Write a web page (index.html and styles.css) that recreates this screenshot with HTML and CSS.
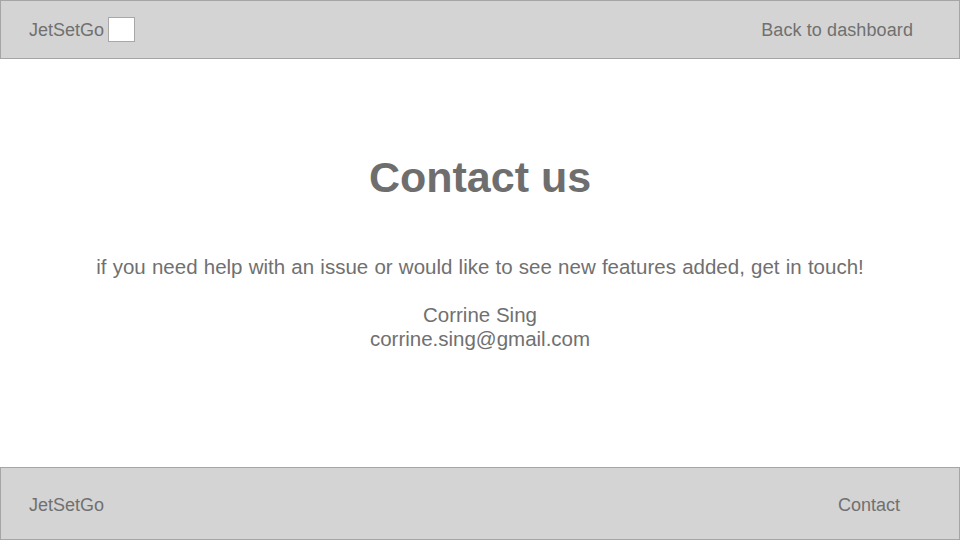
FILE: index.html
```html
<!DOCTYPE html>
<html lang="en">
<head>
<meta charset="utf-8">
<title>Contact us - JetSetGo</title>
<link rel="stylesheet" href="styles.css">
</head>
<body>
<div class="page">
  <header class="topbar">
    <div class="brand">
      <span class="brand-name">JetSetGo</span>
      <span class="brand-logo"></span>
    </div>
    <a class="back-link" href="#">Back to dashboard</a>
  </header>
  <main class="content">
    <h1 class="title">Contact us</h1>
    <p class="intro">if you need help with an issue or would like to see new features added, get in touch!</p>
    <p class="person">Corrine Sing<br>corrine.sing@gmail.com</p>
  </main>
  <footer class="bottombar">
    <span class="foot-brand">JetSetGo</span>
    <a class="foot-link" href="#">Contact</a>
  </footer>
</div>
</body>
</html>
```
FILE: styles.css
```css
* { box-sizing: border-box; }
html, body { margin: 0; padding: 0; }
body {
  width: 960px;
  height: 540px;
  background: #ffffff;
  font-family: "Liberation Sans", Arial, sans-serif;
  color: #707070;
  font-size: 18px;
  line-height: 24px;
}
.page {
  display: flex;
  flex-direction: column;
  height: 540px;
}
.topbar {
  height: 59px;
  background: #d4d4d4;
  border: 1px solid #a5a5a5;
  display: flex;
  align-items: center;
  justify-content: space-between;
  padding: 0 46px 0 28px;
}
.brand {
  display: flex;
  align-items: center;
}
.brand-logo {
  width: 27px;
  height: 25px;
  margin-left: 4px;
  background: #ffffff;
  border: 1px solid #a8a8a8;
}
.back-link, .foot-link {
  color: #707070;
  text-decoration: none;
}
.back-link {
  letter-spacing: 0.1px;
}
.content {
  flex: 1;
  text-align: center;
  padding-top: 93px;
  font-size: 20.5px;
}
.title {
  margin: 0;
  font-size: 43px;
  line-height: 50px;
  font-weight: bold;
  color: #6e6e6e;
}
.intro {
  margin: 53px 0 0;
  word-spacing: 0.5px;
}
.person {
  margin: 24px 0 0;
}
.bottombar {
  height: 73px;
  background: #d4d4d4;
  border: 1px solid #a5a5a5;
  display: flex;
  align-items: center;
  justify-content: space-between;
  padding: 2px 59px 0 28px;
}
```
